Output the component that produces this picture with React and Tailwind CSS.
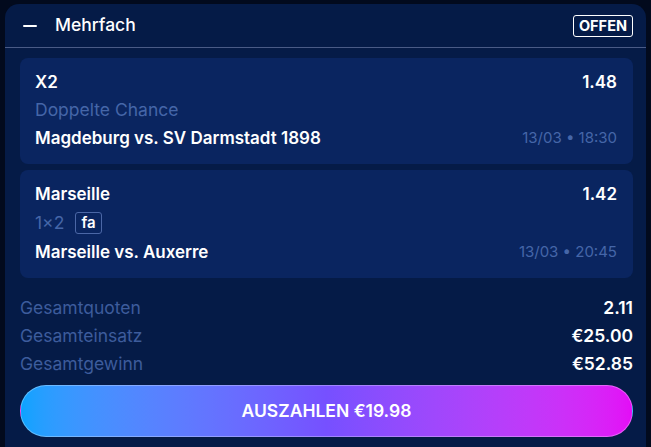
const legs = [
  {
    pick: 'X2',
    odds: '1.48',
    market: 'Doppelte Chance',
    tag: null,
    match: 'Magdeburg vs. SV Darmstadt 1898',
    time: '13/03 • 18:30',
  },
  {
    pick: 'Marseille',
    odds: '1.42',
    market: '1×2',
    tag: 'fa',
    match: 'Marseille vs. Auxerre',
    time: '13/03 • 20:45',
  },
];

const totals = [
  { label: 'Gesamtquoten', value: '2.11' },
  { label: 'Gesamteinsatz', value: '€25.00' },
  { label: 'Gesamtgewinn', value: '€52.85' },
];

export default function App() {
  return (
    <div
      className="h-[447px] w-[651px] overflow-hidden bg-[#020a1d] pl-[5px] pr-[5px] pt-1"
      style={{ fontFamily: 'Inter, "Noto Sans", sans-serif' }}
    >
      <div className="h-[460px] rounded-t-[14px] bg-[#051b47]">
        {/* header */}
        <div className="flex h-[44px] items-center justify-between border-b border-[#4a5b86] pl-[18px] pr-[13px]">
          <div className="flex items-center">
            <span className="block h-[2px] w-[14px] rounded-full bg-white" />
            <span className="ml-[18px] text-[17.5px] font-medium text-white">Mehrfach</span>
          </div>
          <span className="flex h-[22px] items-center rounded-[3px] border border-white px-[5px] text-[14.5px] font-bold text-white">
            OFFEN
          </span>
        </div>

        <div className="pl-[15px] pr-[13px] pt-[10px]">
          <div className="flex flex-col gap-[6px]">
            {legs.map((leg) => (
              <div key={leg.match} className="rounded-[8px] bg-[#0a2560] pb-[14px] pl-[15px] pr-4 pt-3">
                <div className="flex items-center justify-between text-[17px] font-semibold leading-6 text-white">
                  <span>{leg.pick}</span>
                  <span>{leg.odds}</span>
                </div>
                <div className={`mt-1 flex items-center text-[17.5px] leading-6 text-[#4566a8] ${leg.tag ? 'h-[26px]' : 'h-6'}`}>
                  <span>{leg.market}</span>
                  {leg.tag && (
                    <span className="ml-[11px] flex h-[22px] items-center rounded-[3px] border border-[#4b67a6] px-[5px] text-[15px] font-semibold text-white">
                      {leg.tag}
                    </span>
                  )}
                </div>
                <div className="mt-1 flex items-center justify-between leading-6">
                  <span className="text-[17px] font-semibold text-white">{leg.match}</span>
                  <span className="text-[15px] text-[#4566a8]">{leg.time}</span>
                </div>
              </div>
            ))}
          </div>

          <div className="pt-4">
            {totals.map((t) => (
              <div key={t.label} className="flex items-center justify-between text-[17.5px] leading-7">
                <span className="text-[#3d5c9c]">{t.label}</span>
                <span className="font-semibold text-white">{t.value}</span>
              </div>
            ))}
          </div>

          <button className="mt-[7px] flex h-[52px] w-full items-center justify-center rounded-full border border-white/30 bg-gradient-to-r from-[#0aa3ff] via-[#7650ff] to-[#e30cf6] text-[17.5px] font-semibold text-white">
            AUSZAHLEN €19.98
          </button>
        </div>
      </div>
    </div>
  );
}
